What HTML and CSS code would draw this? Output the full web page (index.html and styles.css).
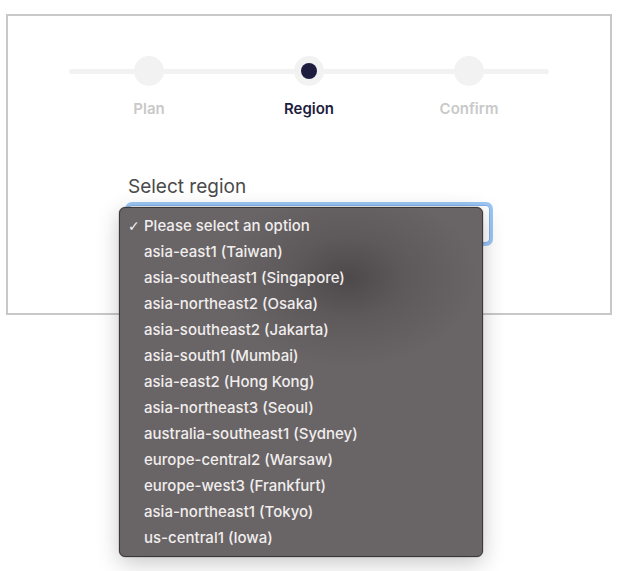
FILE: index.html
```html
<!DOCTYPE html>
<html>
<head>
<meta charset="utf-8">
<link rel="stylesheet" href="styles.css">
</head>
<body>
<div class="card">
  <div class="stepper">
    <div class="step">
      <div class="dot"></div>
      <div class="label">Plan</div>
    </div>
    <div class="step active">
      <div class="dot"><span class="inner"></span></div>
      <div class="label">Region</div>
    </div>
    <div class="step">
      <div class="dot"></div>
      <div class="label">Confirm</div>
    </div>
  </div>
  <div class="form">
    <div class="field-label">Select region</div>
    <div class="select-wrap">
      <div class="select"></div>
      <div class="menu">
        <div class="item checked"><span class="check">✓</span>Please select an option</div>
        <div class="item">asia-east1 (Taiwan)</div>
        <div class="item">asia-southeast1 (Singapore)</div>
        <div class="item">asia-northeast2 (Osaka)</div>
        <div class="item">asia-southeast2 (Jakarta)</div>
        <div class="item">asia-south1 (Mumbai)</div>
        <div class="item">asia-east2 (Hong Kong)</div>
        <div class="item">asia-northeast3 (Seoul)</div>
        <div class="item">australia-southeast1 (Sydney)</div>
        <div class="item">europe-central2 (Warsaw)</div>
        <div class="item">europe-west3 (Frankfurt)</div>
        <div class="item">asia-northeast1 (Tokyo)</div>
        <div class="item">us-central1 (Iowa)</div>
      </div>
    </div>
  </div>
</div>
</body>
</html>
```
FILE: styles.css
```css
html, body {
  margin: 0;
  padding: 0;
  background: #ffffff;
  font-family: Inter, "Liberation Sans", sans-serif;
}
body {
  min-height: 571px;
}
.card {
  box-sizing: border-box;
  width: 606px;
  height: 301px;
  margin: 14px 0 0 6px;
  border: 2px solid #c8c8c8;
  padding-top: 40px;
}
.stepper {
  position: relative;
  width: 480px;
  margin-left: 61px;
  display: grid;
  grid-template-columns: repeat(3, 160px);
}
.stepper::before {
  content: "";
  position: absolute;
  left: 0;
  right: 0;
  top: 13px;
  height: 5px;
  border-radius: 3px;
  background: #f2f2f2;
}
.step {
  position: relative;
  display: flex;
  flex-direction: column;
  align-items: center;
}
.dot {
  width: 30px;
  height: 30px;
  border-radius: 50%;
  background: #f2f2f2;
  display: flex;
  align-items: center;
  justify-content: center;
}
.inner {
  width: 16px;
  height: 16px;
  border-radius: 50%;
  background: #1e1d40;
}
.label {
  margin-top: 14px;
  font-size: 15px;
  line-height: 18px;
  font-weight: 600;
  color: #c9c9c9;
}
.step.active .label {
  color: #1e1d40;
}
.form {
  margin: 57px 0 0 120px;
}
.field-label {
  font-size: 19px;
  line-height: 24px;
  color: #4a4a4a;
}
.select-wrap {
  position: relative;
  margin-top: 6px;
  width: 362px;
}
.select {
  box-sizing: border-box;
  height: 38px;
  border: 1px solid #7fb1ea;
  border-radius: 4px;
  box-shadow: 0 0 0 3px #9cc6f4;
  background: #fff;
}
.menu {
  position: absolute;
  left: -9px;
  top: 2px;
  z-index: 5;
  box-sizing: border-box;
  width: 364px;
  height: 350px;
  padding: 5px 0 6px;
  border: 1px solid #3a3839;
  border-radius: 6px;
  background: radial-gradient(ellipse 130px 90px at 63% 20%, #4d494a 0%, #5e595a 45%, #696465 100%);
  background-color: #696465;
  box-shadow: 0 6px 22px rgba(0, 0, 0, 0.22), 0 0 0 0.5px rgba(0,0,0,0.2);
}
.item {
  position: relative;
  height: 26px;
  line-height: 26px;
  padding-left: 24px;
  font-size: 15px;
  font-weight: 500;
  color: #f1eeee;
  white-space: nowrap;
}
.check {
  position: absolute;
  left: 8px;
  top: 0;
  font-family: "DejaVu Sans", sans-serif;
  font-size: 14px;
  font-weight: bold;
  color: #f1eeee;
}
```
